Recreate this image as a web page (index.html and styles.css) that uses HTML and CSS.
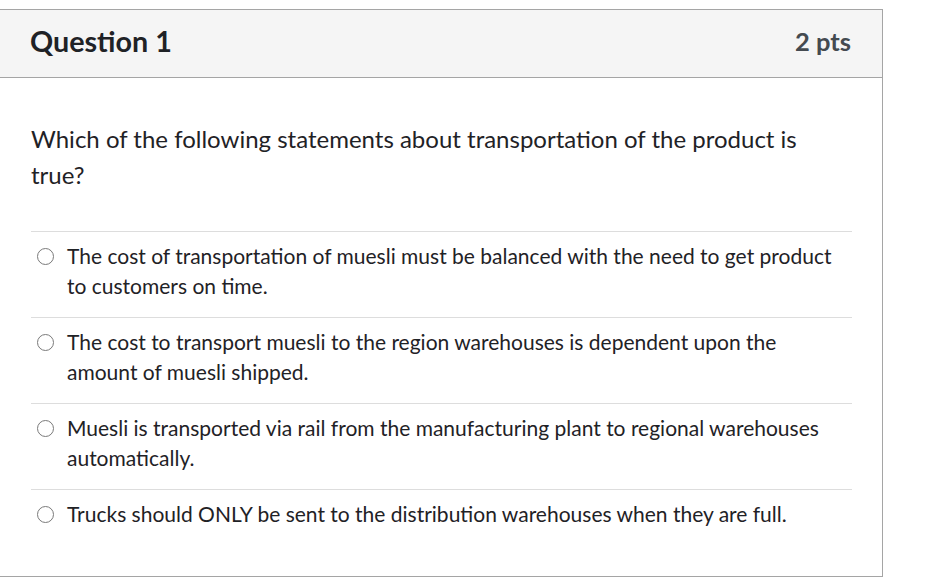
FILE: index.html
```html
<!DOCTYPE html>
<html>
<head>
<meta charset="utf-8">
<link rel="stylesheet" href="styles.css">
</head>
<body>
<div class="question">
  <div class="header">
    <h2 class="title">Question 1</h2>
    <div class="pts">2 pts</div>
  </div>
  <div class="content">
    <div class="text">Which of the following statements about transportation of the product is true?</div>
    <div class="answers">
      <div class="answer"><span class="radio"></span><div class="label">The cost of transportation of muesli must be balanced with the need to get product to customers on time.</div></div>
      <div class="answer"><span class="radio"></span><div class="label">The cost to transport muesli to the region warehouses is dependent upon the amount of muesli shipped.</div></div>
      <div class="answer"><span class="radio"></span><div class="label">Muesli is transported via rail from the manufacturing plant to regional warehouses automatically.</div></div>
      <div class="answer"><span class="radio"></span><div class="label">Trucks should ONLY be sent to the distribution warehouses when they are full.</div></div>
    </div>
  </div>
</div>
</body>
</html>
```
FILE: styles.css
```css
html, body {
  margin: 0;
  padding: 0;
  background: #fff;
}
body {
  font-family: Lato, "Open Sans", sans-serif;
  color: #2d3b45;
}
.question {
  margin: 9px 0 0 -1px;
  width: 884px;
  border: 1px solid #a5a5a5;
  height: 568px;
  box-sizing: border-box;
}
.header {
  display: flex;
  justify-content: space-between;
  align-items: center;
  background: #f5f5f5;
  border-bottom: 1px solid #a5a5a5;
  height: 68px;
  box-sizing: border-box;
  padding: 0 31px 5px 30px;
}
.title {
  margin: 0;
  font-size: 28.7px;
  font-weight: 700;
  color: #1f2226;
}
.pts {
  font-size: 25.5px;
  font-weight: 700;
  color: #444a50;
}
.content {
  padding: 43px 30px 0 31px;
}
.text {
  font-size: 24px;
  line-height: 36px;
  color: #1f2226;
  padding-right: 40px;
}
.answers {
  margin-top: 38px;
}
.answer {
  display: flex;
  align-items: flex-start;
  border-top: 1px solid #dddddd;
  padding: 9px 0 16px 6px;
  min-height: 60px;
}
.radio {
  flex: none;
  width: 15px;
  height: 15px;
  border: 1.5px solid #7a7a7a;
  border-radius: 50%;
  margin: 6.5px 13px 0 0;
}
.label {
  font-size: 21px;
  line-height: 30px;
  color: #1f2226;
}
```
